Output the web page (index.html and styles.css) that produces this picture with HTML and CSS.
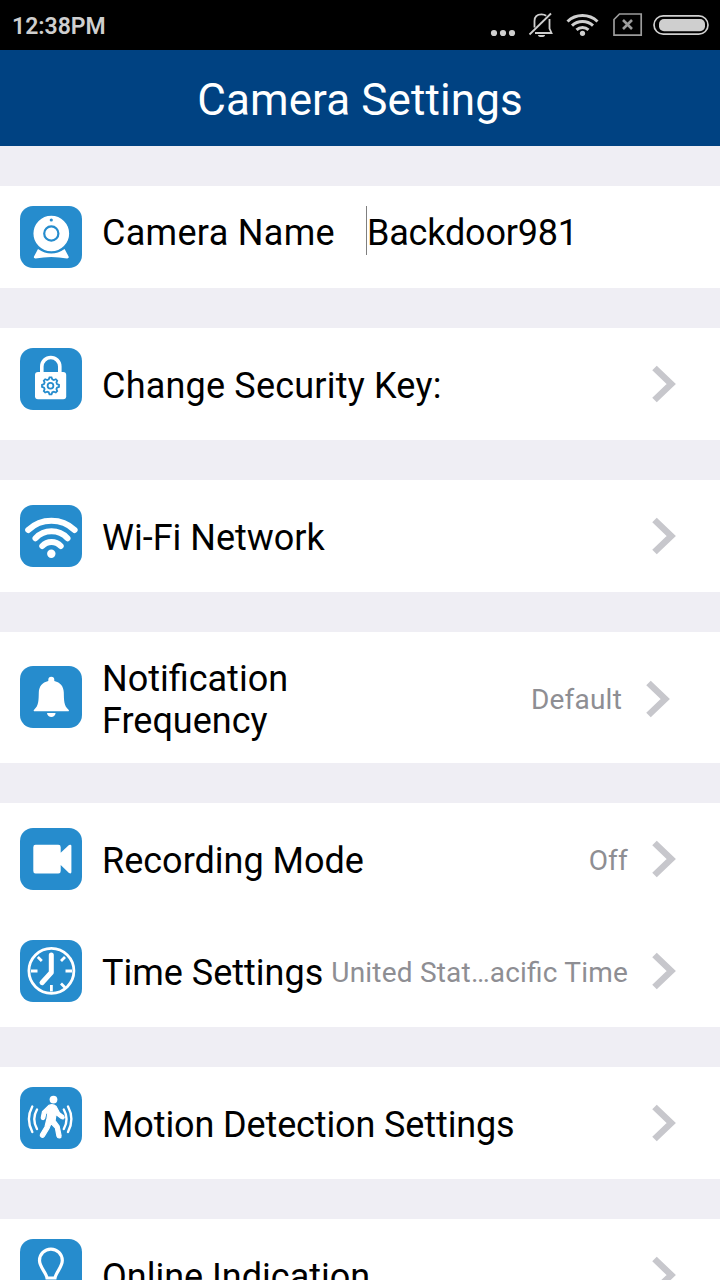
FILE: index.html
```html
<!DOCTYPE html>
<html lang="en">
<head>
  <meta charset="UTF-8">
  <meta name="viewport" content="width=device-width, initial-scale=1.0">
  <title>Camera Settings</title>
  <link rel="stylesheet" href="styles.css">
</head>
<body>
  <div class="phone-screen">
    <!-- Status bar -->
    <div class="status-bar">
      <span class="clock">12:38PM</span>
      <svg class="status-icons" width="230" height="50" viewBox="0 0 230 50">
        <g fill="#cfcfcf">
          <circle cx="4" cy="33" r="3.1"/>
          <circle cx="13" cy="33" r="3.1"/>
          <circle cx="22" cy="33" r="3.1"/>
          <path d="M48 35h7a3.5 2 0 0 1-7 0z"/>
          <circle cx="92.500" cy="33.300" r="2.600"/>
        </g>
        <g fill="none" stroke="#cfcfcf" stroke-width="1.800">
          <path d="M44.500 27.500V21c0-4 2.500-6.700 7-6.700 2 0 3.500.5 4.700 1.500M59.500 19v9.500l2 4.500H45"/>
          <path d="M39.500 34.500L61 13.500"/>
        </g>
        <g fill="none" stroke="#cfcfcf" stroke-width="3">
          <path d="M77.500 21.500a22 22 0 0 1 30 0"/>
          <path d="M82 25.700a15.500 15.500 0 0 1 21 0"/>
          <path d="M86.500 29.800a9 9 0 0 1 12 0"/>
        </g>
        <path d="M129.500 14H151.200V35.200H124V19.500z" fill="none" stroke="#9c9c9c" stroke-width="1.700"/>
        <path d="M133 20l9 9M142 20l-9 9" stroke="#9c9c9c" stroke-width="2.600"/>
        <rect x="164" y="15.800" width="54" height="18.400" rx="9.200" fill="none" stroke="#cfcfcf" stroke-width="1.700"/>
        <rect x="169" y="19" width="46" height="12.300" rx="5" fill="#cfcfcf"/>
      </svg>
    </div>

    <div class="header">Camera Settings</div>

    <div class="settings-group">
      <div class="row row-name">
        <svg class="icon" viewBox="0 0 62 62">
          <rect class="tile" width="62" height="62" rx="13"/>
          <path d="M18 43q13.300 9 26.600 0l4 7.500q.8 2-1.600 1.900-15.700-3-31.400 0-2.400.1-1.600-1.900z" fill="#fff"/>
          <circle cx="31.300" cy="27.500" r="18.600" fill="#fff" stroke="#268ccd" stroke-width="1.500"/>
          <circle cx="31.300" cy="27.500" r="7.100" fill="none" stroke="#268ccd" stroke-width="2.200"/>
          <circle cx="31.300" cy="14" r="1.600" class="tile"/>
        </svg>
        <span class="label">Camera Name</span>
        <span class="camera-name">Backdoor981</span>
      </div>
    </div>

    <div class="settings-group">
      <div class="row row-key">
        <svg class="icon icon-top" viewBox="0 0 62 62">
          <rect class="tile" width="62" height="62" rx="13"/>
          <rect x="15" y="24" width="31.200" height="27.200" rx="3" fill="#fff"/>
          <path d="M21.800 26v-7.500a9 9 0 0 1 18 0V26" fill="none" stroke="#fff" stroke-width="3.600"/>
          <g fill="none" stroke="#268ccd" stroke-width="1.800">
            <circle cx="30.500" cy="37.800" r="2.900"/>
            <path d="M28.700 31.400l.8-2h2l.8 2 1.500.6 2-.8 1.400 1.400-.8 2 .6 1.400 2 .8v2l-2 .8-.6 1.500.8 2-1.400 1.400-2-.8-1.500.6-.8 2h-2l-.8-2-1.500-.6-2 .8-1.400-1.400.8-2-.6-1.500-2-.8v-2l2-.8.6-1.400-.8-2 1.400-1.400 2 .8z"/>
          </g>
        </svg>
        <span class="label">Change Security Key:</span>
        <svg class="chevron" viewBox="0 0 24 38"><path d="M2.500 3L19.200 19 2.500 35"/></svg>
      </div>
    </div>

    <div class="settings-group">
      <div class="row">
        <svg class="icon" viewBox="0 0 62 62">
          <rect class="tile" width="62" height="62" rx="13"/>
          <g fill="none" stroke="#fff" stroke-width="6" stroke-linecap="round">
            <path d="M8.200 25a34 34 0 0 1 46.400 0"/>
            <path d="M15.500 33.200a22 22 0 0 1 32 0"/>
            <path d="M22.300 41a12.500 12.500 0 0 1 18.400 0"/>
          </g>
          <circle cx="31.300" cy="48.800" r="4.200" fill="#fff"/>
        </svg>
        <span class="label">Wi-Fi Network</span>
        <svg class="chevron" viewBox="0 0 24 38"><path d="M2.500 3L19.200 19 2.500 35"/></svg>
      </div>
    </div>

    <div class="settings-group">
      <div class="row row-frequency">
        <svg class="icon" viewBox="0 0 62 62">
          <rect class="tile" width="62" height="62" rx="13"/>
          <path d="M28.300 15v-1.200a3 3 0 0 1 6 0V15c6.200 1.500 9.300 5.500 9.500 11.500.2 7.500 0 13.200 4.700 17.200.8.800.5 1.600-.5 1.600H14.800c-1.200 0-1.500-.8-.7-1.600 4.700-4 4.500-9.700 4.700-17.200.2-6 3.300-10 9.500-11.500z" fill="#fff"/>
          <path d="M27 47h8.600c-.5 5.300-8.100 5.300-8.600 0z" fill="#fff"/>
        </svg>
        <span class="label">Notification<br>Frequency</span>
        <span class="value">Default</span>
        <svg class="chevron" viewBox="0 0 24 38"><path d="M2.500 3L19.200 19 2.500 35"/></svg>
      </div>
    </div>

    <div class="settings-group">
      <div class="row">
        <svg class="icon" viewBox="0 0 62 62">
          <rect class="tile" width="62" height="62" rx="13"/>
          <path d="M15.500 16.800h22.800q2.400 0 2.400 2.400v5.600l8.300-7.700q2.400-1.200 2.400 1v26q0 2.200-2.400 1l-8.300-8v6q0 2.500-2.400 2.500H15.500q-2.200 0-2.200-2.500V19.200q0-2.400 2.200-2.400z" fill="#fff"/>
        </svg>
        <span class="label">Recording Mode</span>
        <span class="value">Off</span>
        <svg class="chevron" viewBox="0 0 24 38"><path d="M2.500 3L19.200 19 2.500 35"/></svg>
      </div>
      <div class="row">
        <svg class="icon" viewBox="0 0 62 62">
          <rect class="tile" width="62" height="62" rx="13"/>
          <g fill="none" stroke="#fff" stroke-width="2.800">
            <circle cx="31.400" cy="30.800" r="22.500"/>
            <path d="M11 31h6.500M45.500 31H52M31.400 45v6.500M17.800 17l4 4M45 17l-4 4M41 43.500l4 4"/>
            <path d="M31.300 15v17.500L22 42.700" stroke-width="5" stroke-linecap="round" stroke-linejoin="round"/>
          </g>
        </svg>
        <span class="label">Time Settings</span>
        <span class="value">United Stat…acific Time</span>
        <svg class="chevron" viewBox="0 0 24 38"><path d="M2.500 3L19.200 19 2.500 35"/></svg>
      </div>
    </div>

    <div class="settings-group">
      <div class="row row-motion">
        <svg class="icon icon-top" viewBox="0 0 62 62">
          <rect class="tile" width="62" height="62" rx="13"/>
          <circle cx="33.500" cy="12.600" r="3.900" fill="#fff"/>
          <path d="M29 18.300q4-1.800 7.200 1.200l3.300 6.300 4 3q1.400 1.400.2 2.700-1 .8-2.400 0l-4.500-3.500-.7-1-1 6.500 4 5.500 2 9.500q.3 2-1.600 2.500-1.900.2-2.500-1.700l-1.600-8.200-4.400-4.500-2 5-4.800 7.700q-1.300 1.600-2.900.7-1.600-1-.8-2.700l4.500-7.600 2-8.300 1-6.800-2.300 2.200-1 4.500q-.7 1.600-2.200 1.200-1.400-.5-1.200-2l1.200-6z" fill="#fff" stroke="#fff" stroke-width="1.200"/>
          <g fill="none" stroke="#fff" stroke-width="2.400" stroke-linecap="round">
            <path d="M12.300 19.500q-6.800 12.500 0 25.500M17 22.500q-5.500 9.500 0 19.500"/>
            <path d="M48 19.500q6.800 12.500 0 25.500M43.800 22.500q5.500 9.500 0 19.500"/>
          </g>
        </svg>
        <span class="label">Motion Detection Settings</span>
        <svg class="chevron" viewBox="0 0 24 38"><path d="M2.500 3L19.200 19 2.500 35"/></svg>
      </div>
    </div>

    <div class="settings-group">
      <div class="row">
        <svg class="icon icon-top" viewBox="0 0 62 62">
          <rect class="tile" width="62" height="62" rx="13"/>
          <path d="M27 39c-.8-5.500-7.500-11-7.500-17.500a11.400 11.400 0 0 1 22.800 0C42.300 28 35.800 33.500 35 39z" fill="none" stroke="#fff" stroke-width="3.200"/>
          <path d="M27 44h8M28 48h6" stroke="#fff" stroke-width="2.500"/>
        </svg>
        <span class="label">Online Indication</span>
        <svg class="chevron" viewBox="0 0 24 38"><path d="M2.500 3L19.200 19 2.500 35"/></svg>
      </div>
    </div>
  </div>
</body>
</html>
```
FILE: styles.css
```css
body {
  margin: 0;
  font-family: Roboto, sans-serif;
  background: #efeef4;
  color: #000;
}

.phone-screen {
  width: 720px;
  height: 1280px;
  overflow: hidden;
}

.status-bar {
  display: flex;
  justify-content: space-between;
  align-items: center;
  height: 50px;
  padding-left: 12px;
  background: #000;
}

.clock {
  padding-top: 2px;
  font-size: 23px;
  font-weight: 600;
  color: #cfcfcf;
}

.header {
  height: 96px;
  line-height: 101px;
  background: #004282;
  color: #fff;
  font-size: 44px;
  letter-spacing: 0.1px;
  text-align: center;
}

.settings-group {
  margin-top: 40px;
  background: #fff;
}

.row {
  display: flex;
  align-items: center;
  box-sizing: border-box;
  height: 112px;
  padding: 0 44px 0 20px;
}

.row-name {
  height: 102px;
}

.row-frequency {
  height: 131px;
  padding: 2px 50px 0 20px;
}

.icon {
  flex: none;
  width: 62px;
  height: 62px;
  margin-right: 20px;
}

.icon-top {
  align-self: flex-start;
  margin-top: 20px;
}

.row-frequency .icon {
  align-self: flex-start;
  margin-top: 32px;
}

.tile {
  fill: #268ccd;
}

.label {
  flex: 1;
  padding-top: 3px;
  font-size: 36px;
  line-height: 42px;
  white-space: nowrap;
}

.row-name .label {
  flex: none;
  width: 264px;
  padding: 0 0 8px;
  letter-spacing: 0.3px;
}

.row-key .label {
  letter-spacing: 0.2px;
}

.row-motion .label {
  letter-spacing: -0.12px;
}

.camera-name {
  margin-bottom: 14px;
  padding-top: 5px;
  border-left: 1px solid #7f7f7f;
  font-size: 36px;
  line-height: 44px;
  letter-spacing: -0.2px;
}

.value {
  padding-top: 2px;
  font-size: 28px;
  letter-spacing: 0.2px;
  font-feature-settings: "liga" 1;
  color: #8e8e93;
  white-space: nowrap;
}

.chevron {
  flex: none;
  width: 24px;
  height: 38px;
  margin-left: 24px;
}

.chevron path {
  fill: none;
  stroke: #c7c7cc;
  stroke-width: 6.5;
}
```
